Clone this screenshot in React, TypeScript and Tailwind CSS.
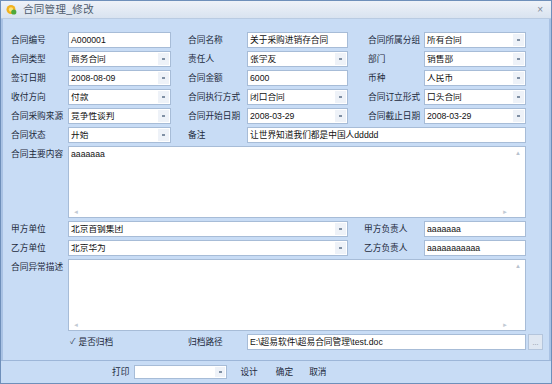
import React from "react";

const FONT = { fontFamily: '"Liberation Sans","Noto Sans CJK SC",sans-serif' };

function Label({ children, className = "" }: { children: React.ReactNode; className?: string }) {
  return (
    <div className={`h-[16px] flex items-center whitespace-nowrap text-[#1d2a3c] ${className}`}>{children}</div>
  );
}

function Input({ value, className = "" }: { value: string; className?: string }) {
  return (
    <div className={`h-[16px] bg-white border border-[#a7bcd7] flex items-center pl-[2px] overflow-hidden whitespace-nowrap text-[#111] ${className}`}>
      {value}
    </div>
  );
}

function Arrow() {
  return (
    <span className="w-[11px] h-[12px] mr-[1px] bg-[#eef2f8] flex items-center justify-center shrink-0">
      <span className="w-[3px] h-[2px] bg-[#8090a4]" />
    </span>
  );
}

function Select({ value, className = "" }: { value: string; className?: string }) {
  return (
    <div className={`h-[16px] bg-white border border-[#a7bcd7] flex items-center overflow-hidden text-[#111] ${className}`}>
      <span className="flex-1 pl-[2px] whitespace-nowrap overflow-hidden">{value}</span>
      <Arrow />
    </div>
  );
}

function TextArea({ value, className = "" }: { value: string; className?: string }) {
  return (
    <div className={`h-[72px] bg-white border border-[#a7bcd7] flex flex-col ${className}`}>
      <div className="flex-1 flex">
        <div className="flex-1 pl-[2px] pt-[3px] text-[#111]">{value}</div>
        <div className="w-[14px] flex flex-col items-center pt-[3px] text-[6px] text-[#b8c2ce]">
          <span>▲</span>
        </div>
      </div>
      <div className="h-[11px] flex items-center justify-between pl-[4px] pr-[17px] text-[6px] text-[#c2cad4]">
        <span>◄</span>
        <span>►</span>
      </div>
    </div>
  );
}

export default function App() {
  return (
    <div
      style={FONT}
      className="w-[552px] h-[384px] flex flex-col bg-[#c8dcf5] border border-[#6e8fba] text-[8.7px] leading-none overflow-hidden"
    >
      {/* title bar */}
      <div className="h-[18px] shrink-0 flex items-center bg-gradient-to-b from-[#eef2f8] to-[#d9e3f0] border-b border-[#b9cbe2] pl-[5px] pr-[8px]">
        <svg width="11" height="11" viewBox="0 0 11 11" className="shrink-0">
          <circle cx="5" cy="5.5" r="4.5" fill="#f2b21f" />
          <circle cx="5" cy="5.5" r="2.2" fill="#fbe27a" />
          <circle cx="7.8" cy="8" r="2.6" fill="#4fa83a" />
        </svg>
        <span className="ml-[6px] text-[10.5px] text-[#4e5b6d] tracking-[0.3px]">合同管理_修改</span>
        <span className="ml-auto text-[10px] text-[#7d8796]">×</span>
      </div>

      {/* body */}
      <div className="flex-1 border-l-2 border-r-2 border-[#a9c2e4] pl-[8px] pt-[13px]">
        <div className="grid grid-cols-[57px_103px_76px_101px_76px_102px_2px_15px] gap-y-[3px]">
          {/* row 1 */}
          <Label>合同编号</Label>
          <Input value="A000001" />
          <Label className="pl-[17px]">合同名称</Label>
          <Input value="关于采购进销存合同" />
          <Label className="pl-[20px]">合同所属分组</Label>
          <Select value="所有合同" />
          <div className="col-span-2" />

          {/* row 2 */}
          <Label>合同类型</Label>
          <Select value="商务合同" />
          <Label className="pl-[17px]">责任人</Label>
          <Select value="张学友" />
          <Label className="pl-[20px]">部门</Label>
          <Select value="销售部" />
          <div className="col-span-2" />

          {/* row 3 */}
          <Label>签订日期</Label>
          <Select value="2008-08-09" />
          <Label className="pl-[17px]">合同金额</Label>
          <Input value="6000" />
          <Label className="pl-[20px]">币种</Label>
          <Select value="人民币" />
          <div className="col-span-2" />

          {/* row 4 */}
          <Label>收付方向</Label>
          <Select value="付款" />
          <Label className="pl-[17px]">合同执行方式</Label>
          <Select value="闭口合同" />
          <Label className="pl-[20px]">合同订立形式</Label>
          <Select value="口头合同" />
          <div className="col-span-2" />

          {/* row 5 */}
          <Label>合同采购来源</Label>
          <Select value="竞争性谈判" />
          <Label className="pl-[17px]">合同开始日期</Label>
          <Select value="2008-03-29" />
          <Label className="pl-[20px]">合同截止日期</Label>
          <Select value="2008-03-29" />
          <div className="col-span-2" />

          {/* row 6 */}
          <Label>合同状态</Label>
          <Select value="开始" />
          <Label className="pl-[17px]">备注</Label>
          <Input value="让世界知道我们都是中国人ddddd" className="col-span-3" />
          <div className="col-span-2" />

          {/* main content */}
          <Label className="self-start">合同主要内容</Label>
          <TextArea value="aaaaaaa" className="col-span-5" />
          <div className="col-span-2" />

          {/* party A */}
          <Label>甲方单位</Label>
          <Select value="北京首钢集团" className="col-span-3" />
          <Label className="pl-[16px]">甲方负责人</Label>
          <Input value="aaaaaaa" />
          <div className="col-span-2" />

          {/* party B */}
          <Label>乙方单位</Label>
          <Select value="北京华为" className="col-span-3" />
          <Label className="pl-[16px]">乙方负责人</Label>
          <Input value="aaaaaaaaaaa" />
          <div className="col-span-2" />

          {/* abnormal */}
          <Label className="self-start">合同异常描述</Label>
          <TextArea value="" className="col-span-5" />
          <div className="col-span-2" />

          {/* archive */}
          <div />
          <Label className="pl-[2px] gap-[3px]">
            <span className="text-[8px] text-[#3a4656]">✓</span>
            <span>是否归档</span>
          </Label>
          <Label className="pl-[17px]">归档路径</Label>
          <Input value="E:\超易软件\超易合同管理\test.doc" className="col-span-3" />
          <div />
          <div className="h-[16px] bg-[#dfe7f2] border border-[#b4c5dc] flex items-end justify-center pb-[3px] text-[7px] text-[#7b8797]">
            ...
          </div>
        </div>
      </div>

      {/* bottom bar */}
      <div className="h-[23px] shrink-0 border-t border-[#9db6d8] flex items-center pl-[111px] text-[#1d2a3c]">
        <span>打印</span>
        <div className="ml-[5px] w-[93px] h-[14px] bg-white border border-[#a7bcd7] flex items-center justify-end">
          <span className="w-[10px] h-[10px] mr-[1px] bg-[#eef2f8] flex items-center justify-center">
            <span className="w-[3px] h-[2px] bg-[#8090a4]" />
          </span>
        </div>
        <span className="ml-[13px]">设计</span>
        <span className="ml-[18px]">确定</span>
        <span className="ml-[16px]">取消</span>
      </div>
    </div>
  );
}
